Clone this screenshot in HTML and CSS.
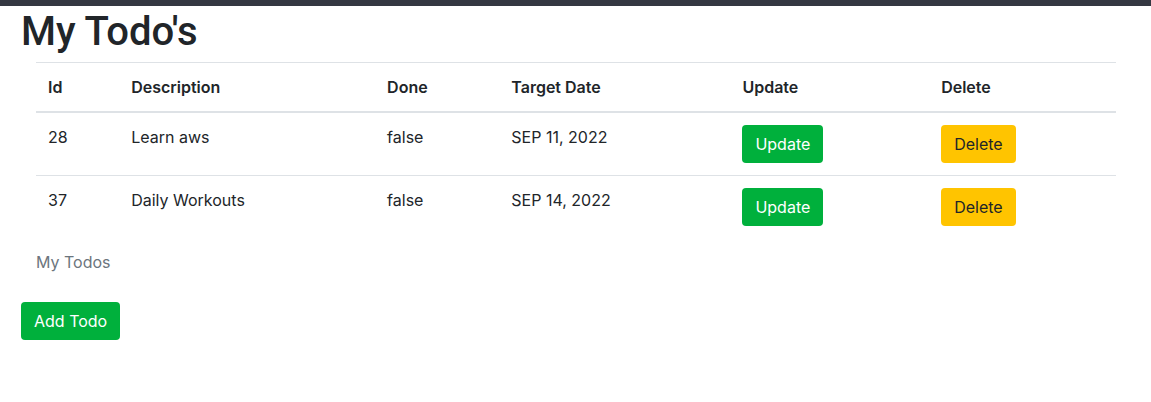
FILE: index.html
```html
<!DOCTYPE html>
<html lang="en">
<head>
<meta charset="utf-8">
<title>My Todo's</title>
<link rel="stylesheet" href="styles.css">
</head>
<body>
<div class="topbar"></div>
<main class="page">
  <h1 class="title">My Todo's</h1>
  <div class="container">
    <table class="table">
      <caption class="caption">My Todos</caption>
      <colgroup>
        <col class="col-id"><col class="col-description"><col class="col-done"><col class="col-date"><col class="col-update"><col class="col-delete">
      </colgroup>
      <thead>
        <tr><th>Id</th><th>Description</th><th>Done</th><th>Target Date</th><th>Update</th><th>Delete</th></tr>
      </thead>
      <tbody>
        <tr>
          <td>28</td><td>Learn aws</td><td>false</td><td>SEP 11, 2022</td>
          <td><button type="button" class="btn btn-success">Update</button></td>
          <td><button type="button" class="btn btn-warning">Delete</button></td>
        </tr>
        <tr>
          <td>37</td><td>Daily Workouts</td><td>false</td><td>SEP 14, 2022</td>
          <td><button type="button" class="btn btn-success">Update</button></td>
          <td><button type="button" class="btn btn-warning">Delete</button></td>
        </tr>
      </tbody>
    </table>
  </div>
  <button type="button" class="btn btn-success">Add Todo</button>
</main>
</body>
</html>
```
FILE: styles.css
```css
* { box-sizing: border-box; }
body {
  margin: 0;
  background: #fff;
  color: #212529;
  font: 16px/24px Inter, "Liberation Sans", sans-serif;
}
.topbar { height: 6px; background: #343842; }
.page { padding: 2px 20px 0 21px; }
.title {
  margin: 0 0 6px;
  font-family: Roboto, "Liberation Sans", sans-serif;
  font-size: 40px;
  font-weight: 500;
  line-height: 48px;
}
.container { padding: 0 15px; }
.table {
  width: 100%;
  margin-bottom: 16px;
  border-collapse: collapse;
  table-layout: fixed;
}
.col-id { width: 7.7%; }
.col-description { width: 23.7%; }
.col-done { width: 11.5%; }
.col-date { width: 21.4%; }
.col-update { width: 18.4%; }
.table th, .table td {
  padding: 12px;
  border-top: 1px solid #dee2e6;
  text-align: left;
  vertical-align: top;
}
.table th { font-weight: 600; }
.table thead th { border-bottom: 2px solid #dee2e6; }
.caption {
  padding: 12px 0;
  caption-side: bottom;
  text-align: left;
  color: #6c757d;
}
.btn {
  padding: 6px 12px;
  border: 1px solid transparent;
  border-radius: 4px;
  font: inherit;
  vertical-align: middle;
}
.btn-success { color: #fff; background: #00b03c; }
.btn-warning { color: #212529; background: #ffc400; }
```
